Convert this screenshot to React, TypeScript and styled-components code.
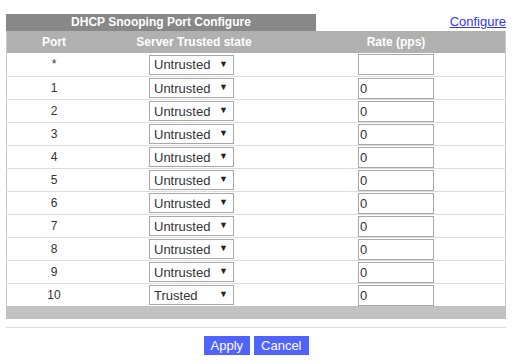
import React from 'react';
import styled, { createGlobalStyle } from 'styled-components';

const GlobalStyle = createGlobalStyle`
  body {
    margin: 0;
    background: #ffffff;
    font-family: 'Liberation Sans', Arial, sans-serif;
    color: #333333;
  }
`;

const ports = ['1', '2', '3', '4', '5', '6', '7', '8', '9', '10'];

function TrustSelect({ value }: { value: string }): JSX.Element {
  return (
    <SelectWrap>
      <Select defaultValue={value}>
        <option value="untrusted">Untrusted</option>
        <option value="trusted">Trusted</option>
      </Select>
      <Arrow>▼</Arrow>
    </SelectWrap>
  );
}

function App(): JSX.Element {
  return (
    <Page>
      <GlobalStyle />
      <TopBar>
        <TitleTab>DHCP Snooping Port Configure</TitleTab>
        <ConfigLink href="#">Configure</ConfigLink>
      </TopBar>
      <Table>
        <thead>
          <tr>
            <HeadCell width={94}>Port</HeadCell>
            <HeadCell width={186}>Server Trusted state</HeadCell>
            <HeadCell>Rate (pps)</HeadCell>
          </tr>
        </thead>
        <tbody>
          <Row>
            <Cell>*</Cell>
            <SelectCell>
              <TrustSelect value="untrusted" />
            </SelectCell>
            <Cell>
              <RateInput defaultValue="" />
            </Cell>
          </Row>
          {ports.map((p) => (
            <Row key={p}>
              <Cell>{p}</Cell>
              <SelectCell>
                <TrustSelect value={p === '10' ? 'trusted' : 'untrusted'} />
              </SelectCell>
              <Cell>
                <RateInput defaultValue="0" />
              </Cell>
            </Row>
          ))}
        </tbody>
      </Table>
      <FooterBar />
      <Divider />
      <Buttons>
        <Button>Apply</Button>
        <Button>Cancel</Button>
      </Buttons>
    </Page>
  );
}

export default App;

const Page = styled.div`
  width: 500px;
  padding: 14px 10px 0 6px;
`;

const TopBar = styled.div`
  display: flex;
  justify-content: space-between;
  align-items: flex-end;
  height: 17px;
`;

const TitleTab = styled.div`
  width: 310px;
  height: 17px;
  line-height: 17px;
  background: #888888;
  color: #ffffff;
  font-size: 12px;
  font-weight: bold;
  text-align: center;
`;

const ConfigLink = styled.a`
  color: #3333ff;
  font-size: 13px;
  line-height: 17px;
  margin-bottom: 1px;
`;

const Table = styled.table`
  width: 500px;
  border-collapse: collapse;
  border-left: 1px solid #c8c8c8;
  border-right: 1px solid #c8c8c8;
`;

const HeadCell = styled.th<{ width?: number }>`
  width: ${(p) => (p.width ? `${p.width}px` : 'auto')};
  height: 22px;
  padding: 0;
  background: #b0b0b0;
  color: #ffffff;
  font-size: 12px;
  font-weight: bold;
  text-align: center;
`;

const Row = styled.tr`
  height: 23px;
  border-bottom: 1px solid #dcdcdc;
  &:last-child {
    border-bottom: none;
  }
`;

const Cell = styled.td`
  padding: 0;
  font-size: 12px;
  text-align: center;
  vertical-align: middle;
`;

const SelectCell = styled(Cell)`
  padding-right: 5px;
`;

const SelectWrap = styled.div`
  position: relative;
  display: inline-block;
  width: 85px;
  height: 20px;
  margin-top: 1px;
  vertical-align: middle;
`;

const Select = styled.select`
  appearance: none;
  -webkit-appearance: none;
  box-sizing: border-box;
  width: 85px;
  height: 20px;
  border: 1px solid #a8a8a8;
  border-radius: 0;
  background: #ffffff;
  color: #333333;
  font-family: 'Liberation Sans', Arial, sans-serif;
  font-size: 13px;
  padding: 0 4px;
`;

const Arrow = styled.span`
  position: absolute;
  right: 6px;
  top: 4px;
  font-size: 9px;
  line-height: 11px;
  color: #222222;
  pointer-events: none;
`;

const RateInput = styled.input`
  box-sizing: border-box;
  width: 76px;
  height: 21px;
  margin-top: 1px;
  border: 1px solid #a8a8a8;
  padding: 0 1px;
  font-family: 'Liberation Sans', Arial, sans-serif;
  font-size: 13px;
  color: #333333;
`;

const FooterBar = styled.div`
  height: 13px;
  background: #c2c2c2;
`;

const Divider = styled.div`
  margin-top: 8px;
  border-top: 1px solid #dcdcdc;
`;

const Buttons = styled.div`
  display: flex;
  justify-content: center;
  gap: 4px;
  margin-top: 8px;
`;

const Button = styled.button`
  height: 19px;
  padding: 0 7px;
  border: none;
  background: #5163ff;
  color: #ffffff;
  font-family: 'Liberation Sans', Arial, sans-serif;
  font-size: 13px;
`;
